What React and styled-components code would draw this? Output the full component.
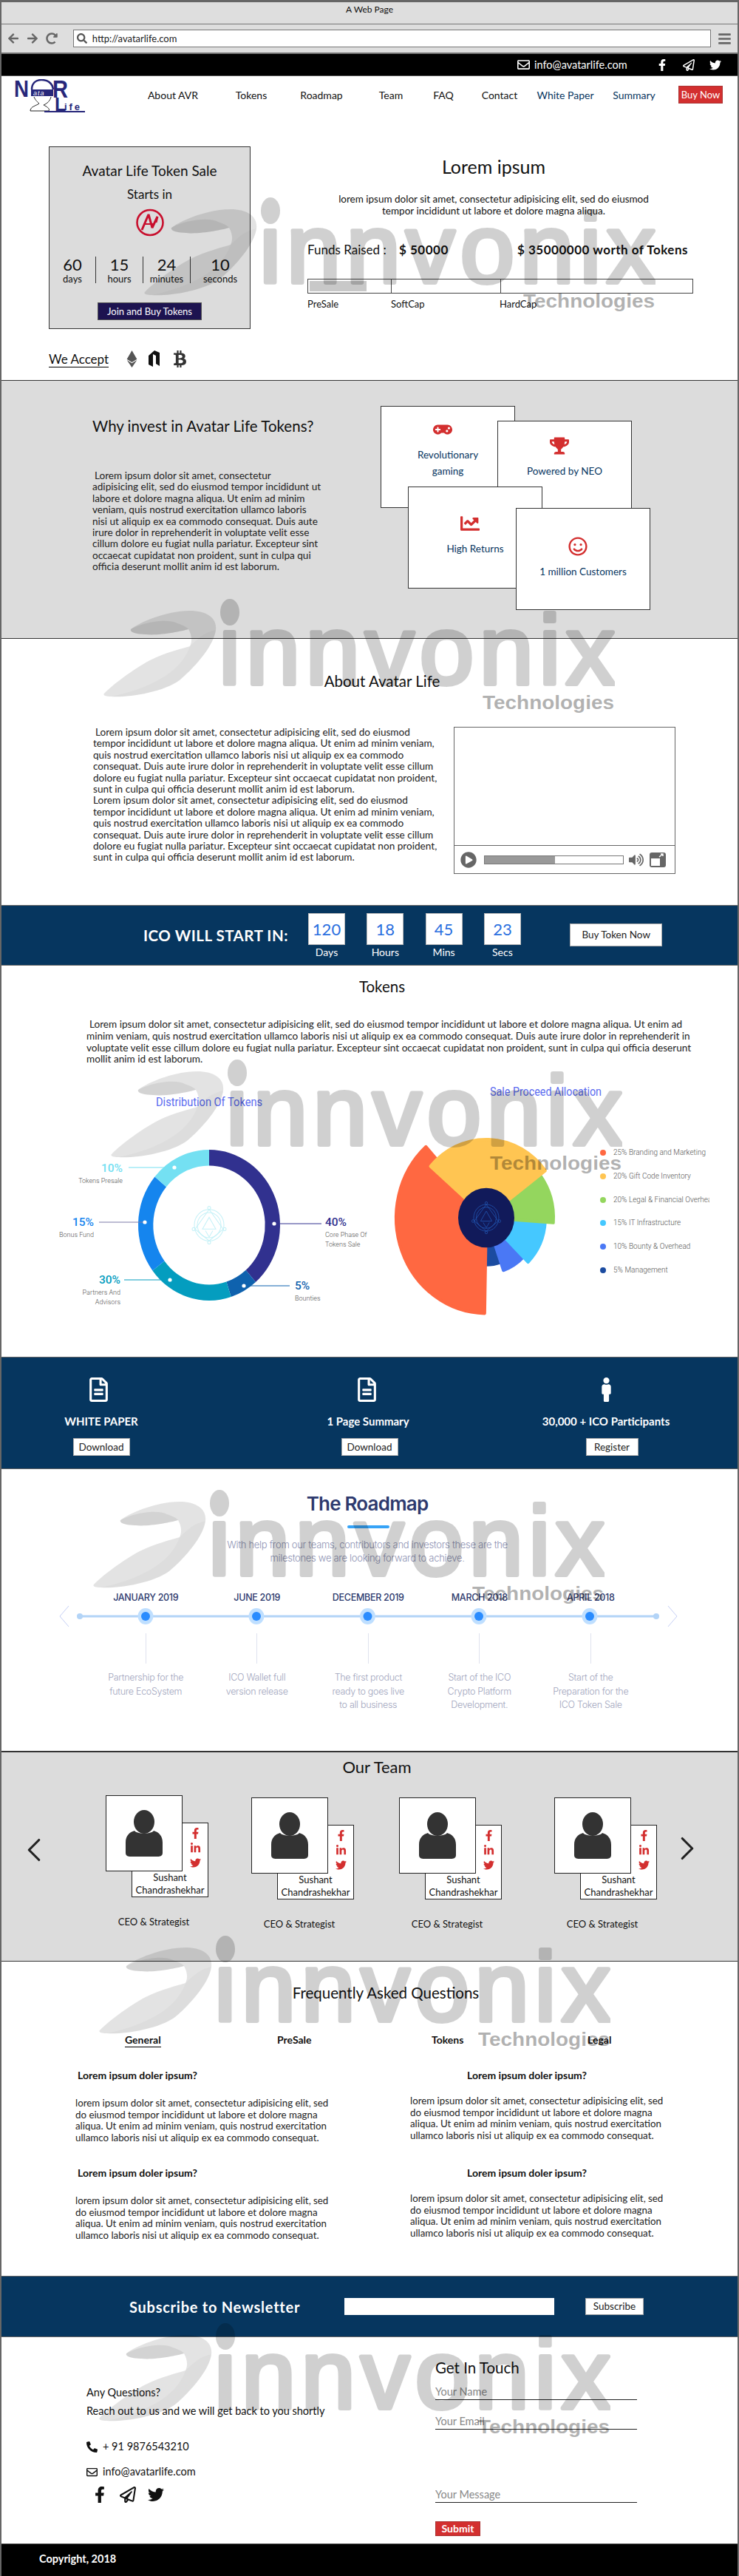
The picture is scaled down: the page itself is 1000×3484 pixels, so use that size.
import React from "react";
import styled, { createGlobalStyle } from "styled-components";
import {
  FaArrowLeft,
  FaArrowRight,
  FaBars,
  FaBtc,
  FaChartLine,
  FaEthereum,
  FaFacebookF,
  FaGamepad,
  FaLinkedinIn,
  FaMale,
  FaPhoneAlt,
  FaPlayCircle,
  FaRedoAlt,
  FaRegEnvelope,
  FaRegFileAlt,
  FaRegPaperPlane,
  FaRegSmile,
  FaSearch,
  FaTrophy,
  FaTwitter,
  FaVolumeUp,
} from "react-icons/fa";
import { ChevronLeft, ChevronRight } from "lucide-react";

const GlobalStyle = createGlobalStyle`
  html, body { margin: 0; padding: 0; background: #fff; }
  * { box-sizing: border-box; }
  body { font-family: "Lato", "Liberation Sans", sans-serif; color: #111; }
`;

const NAVY = "#06365f";
const LOREM_LONG =
  "Lorem ipsum dolor sit amet, consectetur adipisicing elit, sed do eiusmod tempor incididunt ut labore et dolore magna aliqua. Ut enim ad minim veniam, quis nostrud exercitation ullamco laboris nisi ut aliquip ex ea commodo consequat. Duis aute irure dolor in reprehenderit in voluptate velit esse cillum dolore eu fugiat nulla pariatur. Excepteur sint occaecat cupidatat non proident, sunt in culpa qui officia deserunt mollit anim id est laborum.";
const LOREM_FAQ =
  "lorem ipsum dolor sit amet, consectetur adipisicing elit, sed do eiusmod tempor incididunt ut labore et dolore magna aliqua. Ut enim ad minim veniam, quis nostrud exercitation ullamco laboris nisi ut aliquip ex ea commodo consequat.";

const WHY_LINES = [
  "Lorem ipsum dolor sit amet, consectetur",
  "adipisicing elit, sed do eiusmod tempor incididunt ut",
  "labore et dolore magna aliqua. Ut enim ad minim",
  "veniam, quis nostrud exercitation ullamco laboris",
  "nisi ut aliquip ex ea commodo consequat. Duis aute",
  "irure dolor in reprehenderit in voluptate velit esse",
  "cillum dolore eu fugiat nulla pariatur. Excepteur sint",
  "occaecat cupidatat non proident, sunt in culpa qui",
  "officia deserunt mollit anim id est laborum.",
];

const ABOUT_LINES = [
  "tempor incididunt ut labore et dolore magna aliqua. Ut enim ad minim veniam,",
  "quis nostrud exercitation ullamco laboris nisi ut aliquip ex ea commodo",
  "consequat. Duis aute irure dolor in reprehenderit in voluptate velit esse cillum",
  "dolore eu fugiat nulla pariatur. Excepteur sint occaecat cupidatat non proident,",
  "sunt in culpa qui officia deserunt mollit anim id est laborum.",
];

const Page = styled.div`
  position: relative;
  width: 1000px;
  height: 3484px;
  overflow: hidden;
  border-left: 2px solid #666;
  border-right: 2px solid #666;
  background: #fff;
`;

/* browser chrome */
const TitleBar = styled.div`
  height: 33px;
  border-top: 3px solid #666;
  border-bottom: 1px solid #777;
  background: #dedede;
  font-size: 12px;
  line-height: 20px;
  text-align: center;
`;

const ToolBar = styled.div`
  height: 40px;
  display: flex;
  align-items: center;
  padding: 0 8px;
  background: #dedede;
  border-bottom: 2px solid #777;
  color: #666;
`;

const ToolIcons = styled.div`
  width: 89px;
  display: flex;
  gap: 10px;
  font-size: 16px;
  line-height: 0;
`;

const AddressBar = styled.div`
  width: 866px;
  height: 24px;
  display: flex;
  align-items: center;
  gap: 7px;
  padding-left: 4px;
  background: #fff;
  border: 1px solid #777;
  color: #222;
  font-size: 13px;
`;

const Burger = styled.div`
  margin-left: 9px;
  font-size: 19px;
  line-height: 0;
`;

/* top strip and nav */
const TopStrip = styled.div`
  height: 30px;
  display: flex;
  align-items: center;
  padding-left: 698px;
  background: #000;
  color: #fff;
  border-bottom: 1px solid #555;
`;

const StripMail = styled.span`
  width: 188px;
  display: flex;
  align-items: center;
  gap: 6px;
  font-size: 14.5px;
  svg { font-size: 17px; }
`;

const StripIcons = styled.div`
  display: flex;
  gap: 20px;
  font-size: 16px;
  line-height: 0;
`;

const Nav = styled.nav`
  height: 52px;
  display: grid;
  grid-template-columns: 178px 108px 104px 86px 102px 40px 112px 66px 120px 60px;
  align-items: center;
  justify-items: center;
  font-size: 14px;
`;

const LogoSvg = styled.svg`
  justify-self: start;
  margin-left: 16px;
  margin-top: 2px;
`;

const NavLink = styled.a`
  white-space: nowrap;
  margin-top: -1px;
  color: ${(p) => p.$color || "#111"};
`;

const BuyNow = styled.a`
  width: 60px;
  height: 24px;
  margin-top: -3px;
  background: #d32f2f;
  border: 1px solid #a33;
  color: #fff;
  font-size: 13px;
  line-height: 22px;
  text-align: center;
  white-space: nowrap;
`;

/* hero */
const Hero = styled.section`
  height: 360px;
  padding: 43px 0 0 64px;
  border-bottom: 1px solid #333;
`;

const HeroRow = styled.div`
  display: flex;
  gap: 77px;
`;

const SaleCard = styled.div`
  width: 273px;
  height: 247px;
  padding-top: 20px;
  background: #dcdcdc;
  border: 1.5px solid #333;
  text-align: center;
`;

const SaleTitle = styled.div`
  font-size: 19px;
  line-height: 24px;
`;

const StartsIn = styled.div`
  margin: 9px 0 8px;
  font-size: 17px;
  line-height: 22px;
`;

const Counters = styled.div`
  display: grid;
  grid-template-columns: 63px 64px 64px 1fr;
  margin-top: 24px;
`;

const Counter = styled.div`
  height: 36px;
  border-right: ${(p) => (p.$last ? "none" : "1px solid #333")};
`;

const CounterValue = styled.div`
  font-size: 22px;
  line-height: 22px;
`;

const CounterLabel = styled.div`
  font-size: 13px;
  line-height: 16px;
`;

const JoinButton = styled.div`
  width: 141px;
  height: 24px;
  margin: 26px auto 0;
  background: #1d1350;
  border: 1px solid #555;
  color: #fff;
  font-size: 13px;
  line-height: 22px;
`;

const HeroInfo = styled.div`
  width: 522px;
`;

const HeroTitle = styled.h1`
  width: 504px;
  margin: 12px 0 0;
  font-size: 25px;
  font-weight: 400;
  line-height: 30px;
  text-align: center;
`;

const HeroText = styled.p`
  width: 504px;
  margin: 21px 0 0;
  font-size: 13.5px;
  line-height: 16px;
  text-align: center;
`;

const FundsRow = styled.div`
  display: flex;
  margin-top: 35px;
  font-size: 17px;
  line-height: 20px;
`;

const FundLabel = styled.span`
  width: 124px;
`;

const FundValue = styled.strong`
  width: ${(p) => p.$w}px;
  font-weight: 700;
  letter-spacing: 0.5px;
  white-space: nowrap;
`;

const ProgressBar = styled.div`
  display: grid;
  grid-template-columns: 112px 148px 1fr;
  height: 20px;
  margin-top: 29px;
  padding: 0;
  border: 1px solid #444;
`;

const ProgressCell = styled.div`
  border-left: ${(p) => (p.$first ? "none" : "1px solid #444")};
  padding: 2px;
`;

const ProgressFill = styled.div`
  width: 77px;
  height: 14px;
  background: #c8c8c8;
`;

const ProgressLabels = styled.div`
  display: grid;
  grid-template-columns: 113px 147px 1fr;
  margin-top: 6px;
  font-size: 13px;
  line-height: 16px;
`;

const AcceptRow = styled.div`
  display: flex;
  align-items: center;
  height: 30px;
  margin-top: 25px;
  font-size: 17px;
`;

const AcceptLabel = styled.span`
  width: 101px;
  white-space: nowrap;
  span {
    border-bottom: 1px solid #000;
  }
`;

const AcceptIcon = styled.span`
  width: ${(p) => p.$w}px;
  font-size: 23px;
  line-height: 0;
  color: ${(p) => p.$color || "#222"};
`;

/* why invest */
const WhySection = styled.section`
  height: 349px;
  display: flex;
  padding: 48px 0 0 123px;
  background: #dcdcdc;
  border-bottom: 1px solid #333;
`;

const WhyText = styled.div`
  width: 390px;
`;

const SideHeading = styled.h2`
  margin: 0;
  font-size: 20.5px;
  font-weight: 400;
  line-height: 26px;
`;

const BodyText = styled.p`
  width: ${(p) => p.$w}px;
  margin: ${(p) => p.$top || 0}px 0 0;
  font-size: 13.6px;
  line-height: 15.4px;
  color: #222;
  white-space: nowrap;
`;

const Indent = styled.span`
  padding-left: 3px;
`;

const CardStack = styled.div`
  position: relative;
  width: 365px;
  height: 276px;
  margin-top: -14px;
`;

const FeatureCard = styled.div`
  position: absolute;
  left: ${(p) => p.$x}px;
  top: ${(p) => p.$y}px;
  width: 182px;
  height: 138px;
  padding-top: ${(p) => p.$pad}px;
  background: #fff;
  border: 1px solid #333;
  color: ${NAVY};
  font-size: 13.5px;
  line-height: 22px;
  text-align: center;
`;

const FeatureIcon = styled.div`
  height: 28px;
  margin: 0 14px 8px 0;
  color: #d32f2f;
  font-size: 26px;
  line-height: 0;
`;

/* shared heading with the text centred on a page x */
const Heading = styled.h2`
  width: ${(p) => (p.$cx - 2) * 2}px;
  margin: 0;
  font-size: ${(p) => p.$size || 20.5}px;
  font-weight: 400;
  line-height: 26px;
  text-align: center;
`;

/* about */
const AboutSection = styled.section`
  height: 360px;
  padding-top: 44px;
`;

const AboutRow = styled.div`
  display: flex;
  gap: 24px;
  margin-top: 49px;
  padding-left: 124px;
`;

const VideoBox = styled.div`
  width: 300px;
  height: 199px;
  display: flex;
  flex-direction: column;
  justify-content: flex-end;
  border: 1px solid #666;
`;

const VideoControls = styled.div`
  height: 38px;
  display: flex;
  align-items: center;
  gap: 7px;
  padding: 0 11px 0 8px;
  border-top: 1px solid #666;
  color: #666;
`;

const VideoTrack = styled.div`
  width: 189px;
  height: 12px;
  margin-left: 3px;
  border: 1px solid #777;
  background: #fff;
`;

const VideoFill = styled.div`
  height: 100%;
  background: #999;
`;

/* ico band */
const IcoBand = styled.section`
  height: 82px;
  display: flex;
  align-items: flex-start;
  padding: 10px 0 0 192px;
  background: ${NAVY};
  border-top: 1px solid #666;
  border-bottom: 1px solid #666;
  color: #fff;
`;

const IcoTitle = styled.div`
  width: 223px;
  margin-top: 17px;
  font-size: 20.5px;
  font-weight: 700;
  letter-spacing: 0.5px;
  line-height: 26px;
  white-space: nowrap;
`;

const IcoUnit = styled.div`
  width: 50px;
  margin-right: 29.3px;
  text-align: center;
  font-size: 14px;
  line-height: 20px;
`;

const IcoBox = styled.div`
  height: 43px;
  background: #fff;
  border: 1px solid #bbb;
  color: #2a6fe0;
  font-size: 22px;
  line-height: 41px;
`;

const WhiteButton = styled.div`
  width: ${(p) => p.$w}px;
  height: ${(p) => p.$h}px;
  background: #fff;
  border: 1px solid #aaa;
  color: #222;
  font-size: ${(p) => p.$size || 13.5}px;
  line-height: ${(p) => p.$h - 2}px;
  text-align: center;
`;

const IcoButtonWrap = styled.div`
  margin: 14px 0 0 37px;
`;

/* tokens */
const TokensSection = styled.section`
  height: 529px;
  padding-top: 15px;
`;

const TokensText = styled.p`
  width: 828px;
  margin: 31px 0 0 115px;
  font-size: 13.6px;
  line-height: 15.8px;
  text-indent: 4px;
  color: #222;
`;

const ChartRow = styled.div`
  display: flex;
  margin: 19px 0 0 58px;
`;

/* document band */
const DocsBand = styled.section`
  height: 152px;
  display: grid;
  grid-template-columns: 270px 452px 192px;
  padding-top: 27px;
  background: ${NAVY};
  border-top: 1px solid #666;
  border-bottom: 1px solid #666;
  color: #fff;
  text-align: center;
`;

const DocColumn = styled.div`
  display: flex;
  flex-direction: column;
  align-items: center;
`;

const DocIcon = styled.div`
  height: 33px;
  margin-right: ${(p) => p.$nudge || 0}px;
  font-size: 33px;
  line-height: 0;
`;

const DocTitle = styled.div`
  margin-top: 16px;
  font-size: 15px;
  font-weight: 700;
  line-height: 20px;
  white-space: nowrap;
`;

const DocButtonWrap = styled.div`
  margin: 13px 0 0 ${(p) => p.$nudge || 0}px;
`;

/* roadmap */
const RoadmapSection = styled.section`
  height: 381px;
  padding-top: 30px;
  text-align: center;
`;

const RoadmapTitle = styled.h2`
  width: 990px;
  margin: 0;
  color: #2e3a6e;
  font-family: "Inter", sans-serif;
  font-size: 26px;
  font-weight: 600;
  letter-spacing: -0.8px;
  line-height: 34px;
`;

const TitleRule = styled.div`
  width: 57px;
  height: 4px;
  margin: 12px 0 0 468px;
  background: #36a3f7;
  border-radius: 2px;
`;

const RoadmapSub = styled.p`
  width: 990px;
  margin: 13px 0 0;
  color: #8d92b3;
  font-family: "Inter", sans-serif;
  font-size: 13px;
  font-weight: 300;
  letter-spacing: -0.3px;
  line-height: 18px;
`;

const StepGrid = styled.div`
  display: grid;
  grid-template-columns: repeat(5, 150.5px);
  margin-left: 120px;
`;

const DateLabel = styled.div`
  color: #2e3a6e;
  font-family: "Inter", sans-serif;
  font-size: 12.5px;
  font-weight: 500;
  letter-spacing: -0.3px;
  line-height: 18px;
  white-space: nowrap;
`;

const DateGrid = styled(StepGrid)`
  margin-top: 36px;
`;

const RailSvg = styled.svg`
  display: block;
  margin-left: 68px;
`;

const Step = styled.div`
  padding-top: 7px;
`;

const StepLine = styled.div`
  width: 1px;
  height: 41px;
  margin: 0 auto 10px;
  background: #dfe2ee;
`;

const StepText = styled.div`
  color: #a1a5bd;
  font-family: "Inter", sans-serif;
  font-size: 12.5px;
  font-weight: 300;
  letter-spacing: -0.3px;
  line-height: 18.5px;
`;

/* team */
const TeamSection = styled.section`
  height: 285px;
  padding-top: 7px;
  background: #dcdcdc;
  border-top: 2px solid #333;
  border-bottom: 1px solid #333;
`;

const TeamRow = styled.div`
  display: flex;
  margin-top: 25px;
`;

const Arrow = styled.div`
  width: 18px;
  margin: ${(p) => p.$top}px 0 0 ${(p) => p.$left}px;
  color: #222;
  line-height: 0;
`;

const TeamCard = styled.div`
  width: 139px;
  margin: ${(p) => p.$top}px 0 0 ${(p) => p.$left}px;
`;

const TeamFrame = styled.div`
  display: grid;
  grid-template-columns: 35px 69px 35px;
  grid-template-rows: 37px 66px 35px;
`;

const Photo = styled.div`
  grid-column: 1 / 3;
  grid-row: 1 / 3;
  display: flex;
  align-items: center;
  justify-content: center;
  background: #fff;
  border: 1px solid #222;
`;

const Socials = styled.div`
  grid-column: 3;
  grid-row: 2;
  display: flex;
  flex-direction: column;
  align-items: center;
  justify-content: space-around;
  padding: 3px 0 1px;
  background: #fff;
  border: 1px solid #222;
  border-left: none;
  border-bottom: none;
  color: #d32f2f;
  font-size: 15px;
`;

const MemberName = styled.div`
  grid-column: 2 / 4;
  grid-row: 3;
  background: #fff;
  border: 1px solid #222;
  border-top: none;
  font-size: 13px;
  line-height: 17px;
  text-align: center;
`;

const MemberRole = styled.div`
  width: 130px;
  margin-top: 24px;
  font-size: 13px;
  line-height: 18px;
  text-align: center;
  white-space: nowrap;
`;

/* faq */
const FaqSection = styled.section`
  height: 425px;
  padding-top: 29px;
`;

const FaqTabs = styled.div`
  display: grid;
  grid-template-columns: 206px 209px 211px 60px;
  margin: 42px 0 0 167px;
  font-size: 14px;
  font-weight: 700;
  line-height: 18px;
`;

const FaqTab = styled.span`
  justify-self: start;
  border-bottom: ${(p) => (p.$active ? "1px solid #000" : "none")};
`;

const FaqGrid = styled.div`
  display: grid;
  grid-template-columns: 453px 356px;
  row-gap: 31px;
  margin: 29px 0 0 100px;
`;

const FaqQuestion = styled.div`
  padding-left: ${(p) => p.$indent}px;
  font-size: 14px;
  font-weight: 700;
  line-height: 18px;
`;

const FaqAnswer = styled.p`
  width: 356px;
  margin: ${(p) => p.$top}px 0 0;
  font-size: 13.3px;
  line-height: 15.5px;
  color: #222;
`;

/* newsletter */
const NewsBand = styled.section`
  height: 83px;
  display: flex;
  align-items: center;
  padding-left: 173px;
  background: ${NAVY};
  border-top: 1px solid #666;
  border-bottom: 1px solid #666;
`;

const NewsTitle = styled.div`
  width: 291px;
  color: #fff;
  font-size: 20px;
  font-weight: 700;
  letter-spacing: 0.75px;
`;

const NewsInput = styled.input`
  width: 284px;
  height: 23px;
  margin-right: 42px;
  background: #fff;
  border: none;
`;

/* contact */
const ContactSection = styled.section`
  height: 279px;
  display: flex;
  padding-left: 115px;
`;

const ContactLeft = styled.div`
  width: 472px;
  padding-top: 65px;
  font-size: 14.5px;
  line-height: 20px;
`;

const ContactLine = styled.div`
  display: flex;
  align-items: center;
  gap: 7px;
  margin-top: ${(p) => p.$top}px;
  svg { font-size: 15px; }
`;

const ContactSocial = styled.div`
  display: flex;
  align-items: center;
  gap: 16px;
  height: 28px;
  margin: 7px 0 0 7px;
  font-size: 22px;
`;

const ContactRight = styled.div`
  width: 273px;
  padding-top: 28px;
`;

const ContactField = styled.input`
  display: block;
  width: 273px;
  height: 23px;
  margin-top: ${(p) => p.$top}px;
  padding: 0;
  background: transparent;
  border: none;
  border-bottom: 1px solid #222;
  font-family: inherit;
  font-size: 14.5px;
  &::placeholder {
    color: #888;
    opacity: 1;
  }
`;

const SubmitButton = styled.div`
  width: 61px;
  height: 20px;
  margin-top: 25px;
  background: #d32f2f;
  border: 1px solid #a33;
  color: #fff;
  font-size: 14px;
  font-weight: 700;
  line-height: 18px;
  text-align: center;
`;

const Footer = styled.footer`
  height: 44px;
  padding-left: 51px;
  background: #000;
  border-top: 1px solid #555;
  color: #fff;
  font-size: 14.5px;
  font-weight: 700;
  line-height: 40px;
`;

/* watermark over the page */
const MarkSvg = styled.svg`
  position: absolute;
  left: ${(p) => p.$x - 2}px;
  top: ${(p) => p.$y}px;
  pointer-events: none;
  z-index: 5;
`;

function Watermark({ x, y }) {
  return (
    <MarkSvg $x={x} $y={y} width="692" height="156" viewBox="0 0 692 156">
      <path
        d="M37 41C48 32 85 16 117 16C140 16 154 26 152 42C150 60 130 87 103 110C80 127 30 134 10 132C2 132 -1 130 1 128C10 118 40 95 63 83C85 72 105 68 117 64C120 58 120 50 115 41C105 44 75 50 57 48C45 48 35 45 37 41Z"
        fill="#000"
        opacity="0.11"
      />
      <path
        d="M37 41C50 33 85 25 100 33C108 36 113 38 115 41C105 44 75 50 57 48C45 48 35 45 37 41Z"
        fill="#000"
        opacity="0.07"
      />
      <path
        d="M10 132C60 122 105 100 117 64C130 52 135 46 152 42C150 60 130 87 103 110C80 127 30 134 10 132Z"
        fill="#000"
        opacity="0.025"
      />
      <g opacity="0.18">
        <ellipse cx="171" cy="18" rx="13" ry="18" fill="#000" />
        <text
          x="156"
          y="115"
          fontFamily="Liberation Sans"
          fontSize="132"
          textLength="536"
          lengthAdjust="spacing"
          stroke="#000"
          strokeWidth="6"
          strokeLinejoin="round"
        >
          innvonix
        </text>
      </g>
      <text
        x="513"
        y="149"
        fontFamily="Liberation Sans"
        fontSize="26"
        fontWeight="700"
        textLength="178"
        lengthAdjust="spacingAndGlyphs"
        fill="#000"
        opacity="0.3"
      >
        Technologies
      </text>
    </MarkSvg>
  );
}

function AvatarLogo() {
  return (
    <LogoSvg width="100" height="46" viewBox="0 0 100 46">
      <text x="1" y="24" fontFamily="Liberation Sans" fontWeight="700" fontSize="32" textLength="20" lengthAdjust="spacingAndGlyphs" fill="#27277a">N</text>
      <path d="M25 14C25 5 31 1 38 1C46 1 53 5 54 14" fill="none" stroke="#27277a" strokeWidth="2.5" />
      <path d="M28 24C30 29 33 31 35 33C31 36 23 37 23 43H48C50 40 45 37 41 35C46 33 50 29 51 24" fill="#fff" stroke="#222" strokeWidth="1" />
      <rect x="24" y="14" width="30" height="9" fill="#27277a" />
      <text x="27" y="21.5" fontFamily="Liberation Sans" fontStyle="italic" fontSize="9" fill="#fff" letterSpacing="1">ata</text>
      <text x="53" y="25" fontFamily="Liberation Sans" fontWeight="700" fontSize="33" textLength="21" lengthAdjust="spacingAndGlyphs" fill="#27277a">R</text>
      <text x="56" y="43" fontFamily="Liberation Sans" fontWeight="700" fontSize="25" fill="#27277a">L</text>
      <text x="69" y="42" fontFamily="Liberation Sans" fontWeight="700" fontSize="13" textLength="21" fill="#27277a">ife</text>
      <rect x="42" y="43" width="55" height="2" fill="#27277a" />
    </LogoSvg>
  );
}

function SaleMark() {
  return (
    <svg width="40" height="38" viewBox="0 0 40 38">
      <ellipse cx="20" cy="19" rx="17.5" ry="17" fill="none" stroke="#c8102e" strokeWidth="2.6" />
      <path d="M9 29L18 8L23 26L30 11L28 19" fill="none" stroke="#c8102e" strokeWidth="3" strokeLinejoin="bevel" />
      <path d="M13 21H24" stroke="#c8102e" strokeWidth="2" />
    </svg>
  );
}

function NeoMark() {
  return (
    <svg width="18" height="24" viewBox="0 0 18 24">
      <path d="M1 8L9 1L16 4V22L11 19V8L7 6V23L1 20Z" fill="#111" />
    </svg>
  );
}

const polar = (r, deg) => {
  const a = (deg * Math.PI) / 180;
  return [r * Math.sin(a), -r * Math.cos(a)];
};

// ring slice, angles clockwise from the top
const slice = (inner, outer, from, to) => {
  const [x0, y0] = polar(outer, from);
  const [x1, y1] = polar(outer, to);
  const [x2, y2] = polar(inner, to);
  const [x3, y3] = polar(inner, from);
  const large = to - from > 180 ? 1 : 0;
  return `M${x0} ${y0}A${outer} ${outer} 0 ${large} 1 ${x1} ${y1}L${x2} ${y2}A${inner} ${inner} 0 ${large} 0 ${x3} ${y3}Z`;
};

function CoreGlyph({ color }) {
  return (
    <g fill="none" stroke={color} strokeWidth="1">
      <circle r="20" />
      <circle r="16" />
      <circle cx="0" cy="-22" r="2" />
      <circle cx="0" cy="22" r="2" />
      <circle cx="-21" cy="5" r="2" />
      <circle cx="21" cy="5" r="2" />
      <path d="M0-20L-19 5L0 20L19 5Z" />
      <path d="M0-10L-9 5H9Z" />
      <path d="M-5 7L0 15L5 7" />
    </g>
  );
}

const DONUT_SLICES = [
  { from: 0, to: 139, color: "#31318f" },
  { from: 139, to: 162, color: "#0f62ae" },
  { from: 162, to: 233, color: "#049dbf" },
  { from: 233, to: 310, color: "#1585ee" },
  { from: 310, to: 360, color: "#74e0f2" },
];

const DONUT_LABELS = [
  { pct: "40%", color: "#31318f", x: 380, y: 198, lines: ["Core Phase Of", "Tokens Sale"], line: [319, 375, 195, "#31318f"], dot: [311, 195] },
  { pct: "5%", color: "#0f62ae", x: 339, y: 284, lines: ["Bounties"], line: [278, 332, 279, "#0f62ae"], dot: [270, 279] },
  { pct: "30%", color: "#049dbf", x: 103, y: 276, anchor: "end", lines: ["Partners And", "Advisors"], line: [108, 170, 271, "#049dbf"], dot: [170, 271] },
  { pct: "15%", color: "#1585ee", x: 67, y: 198, anchor: "end", lines: ["Bonus Fund"], line: [74, 136, 193, "#7c7aa8"], dot: [136, 193] },
  { pct: "10%", color: "#74e0f2", x: 106, y: 125, anchor: "end", lines: ["Tokens Presale"], line: [114, 176, 119, "#74e0f2"], dot: [176, 119] },
];

function DonutChart() {
  return (
    <svg width="440" height="340" viewBox="0 0 440 340" fontFamily="Roboto">
      <text x="151" y="36" fontSize="16.5" textLength="144" lengthAdjust="spacingAndGlyphs" fill="#5b6cf0">Distribution Of Tokens</text>
      <g transform="translate(223 197) scale(1 1.0625)">
        {DONUT_SLICES.map((s) => (
          <path key={s.from} d={slice(75.7, 96, s.from, s.to)} fill={s.color} />
        ))}
        <CoreGlyph color="#c5f1f7" />
      </g>
      {DONUT_LABELS.map((l) => (
        <g key={l.pct}>
          <line x1={l.line[0]} x2={l.line[1]} y1={l.line[2]} y2={l.line[2]} stroke={l.line[3]} strokeWidth="1" />
          <circle cx={l.dot[0]} cy={l.dot[1]} r="2.6" fill="#fff" />
          <text x={l.x} y={l.y} textAnchor={l.anchor || "start"} fontSize="15.5" fontWeight="500" fill={l.color}>{l.pct}</text>
          {l.lines.map((t, i) => (
            <text key={t} x={l.x} y={l.y + 15 + i * 13} textAnchor={l.anchor || "start"} fontSize="9" fill="#555" fontWeight="300">{t}</text>
          ))}
        </g>
      ))}
    </svg>
  );
}

const PIE_SLICES = [
  { from: 161, to: 181, r: 60, color: "#1b4ba0" },
  { from: 135, to: 161, r: 71, color: "#4a78f5" },
  { from: 93.5, to: 135, r: 80, color: "#45c8ff" },
  { from: 53, to: 94, r: 91, color: "#94d65e" },
  { from: 181, to: 318, r: 122, color: "#ff6841" },
  { from: -49, to: 53, r: 100, color: "#ffc552" },
];

const PIE_LEGEND = [
  ["25% Branding and Marketing", "#ff6841", 99],
  ["20% Gift Code Inventory", "#ffc552", 131],
  ["20% Legal & Financial Overhead", "#94d65e", 163],
  ["15% IT Infrastructure", "#45c8ff", 194],
  ["10% Bounty & Overhead", "#4a78f5", 226],
  ["5% Management", "#1b4ba0", 258],
];

function PieChart() {
  return (
    <svg width="460" height="340" viewBox="0 0 460 340" fontFamily="Roboto">
      <text x="163" y="22" fontSize="16.5" textLength="151" lengthAdjust="spacingAndGlyphs" fill="#5b6cf0">Sale Proceed Allocation</text>
      <g transform="translate(158 187) scale(1 1.06)">
        {PIE_SLICES.map((s) => (
          <path
            key={s.color}
            d={slice(0, s.r, s.from, s.to)}
            fill={s.color}
            stroke={s.color}
            strokeWidth="4"
            strokeLinejoin="round"
          />
        ))}
        <circle r="38" fill="#111a5a" />
        <g transform="scale(0.85)">
          <CoreGlyph color="#1f4fa8" />
        </g>
      </g>
      {PIE_LEGEND.map(([label, color, y]) => (
        <g key={label}>
          <circle cx="316" cy={y} r="4" fill={color} />
          <text x="330" y={y + 3} fontSize="10" fill="#555" fontWeight="300">{label}</text>
        </g>
      ))}
    </svg>
  );
}

const ROAD_NODES = [127, 277, 427.5, 578, 728];

function RoadRail() {
  return (
    <RailSvg width="860" height="32" viewBox="0 0 860 32">
      <path d="M23 2L11 16L23 30" fill="none" stroke="#c5cff5" strokeWidth="1" />
      <path d="M834 2L846 16L834 30" fill="none" stroke="#c5cff5" strokeWidth="1" />
      <line x1="38" x2="818" y1="16" y2="16" stroke="#b3d4f7" strokeWidth="3" />
      <circle cx="38" cy="16" r="4" fill="#b3d4f7" />
      <circle cx="818" cy="16" r="4" fill="#b3d4f7" />
      {ROAD_NODES.map((x) => (
        <g key={x}>
          <ellipse cx={x} cy="16" rx="10.5" ry="11" fill="#bfdfff" />
          <circle cx={x} cy="16" r="6" fill="#2a8cff" />
        </g>
      ))}
    </RailSvg>
  );
}

const ROAD_STEPS = [
  ["JANUARY 2019", ["Partnership for the", "future EcoSystem"]],
  ["JUNE 2019", ["ICO Wallet full", "version release"]],
  ["DECEMBER 2019", ["The first product", "ready to goes live", "to all business"]],
  ["MARCH 2018", ["Start of the ICO", "Crypto Platform", "Development."]],
  ["APRIL 2018", ["Start of the", "Preparation for the", "ICO Token Sale"]],
];

function PersonIcon() {
  return (
    <svg width="52" height="64" viewBox="0 0 52 64">
      <ellipse cx="26" cy="16" rx="14" ry="16" fill="#333" />
      <path d="M13 28C17 33 35 33 39 28C46 30 51 35 51 44V58C51 62 48 63 44 63H8C4 63 1 62 1 58V44C1 35 6 30 13 28Z" fill="#333" />
    </svg>
  );
}

const TEAM = [
  { left: 106, top: 0 },
  { left: 58, top: 3 },
  { left: 61, top: 3 },
  { left: 71, top: 3 },
];

export default function App() {
  return (
    <>
      <GlobalStyle />
      <Page>
        <TitleBar>A Web Page</TitleBar>
        <ToolBar>
          <ToolIcons>
            <FaArrowLeft />
            <FaArrowRight />
            <FaRedoAlt />
          </ToolIcons>
          <AddressBar>
            <FaSearch size={14} color="#555" />
            http://avatarlife.com
          </AddressBar>
          <Burger>
            <FaBars />
          </Burger>
        </ToolBar>
        <TopStrip>
          <StripMail>
            <FaRegEnvelope />
            info@avatarlife.com
          </StripMail>
          <StripIcons>
            <FaFacebookF />
            <FaRegPaperPlane />
            <FaTwitter />
          </StripIcons>
        </TopStrip>
        <Nav>
          <AvatarLogo />
          <NavLink>About AVR</NavLink>
          <NavLink>Tokens</NavLink>
          <NavLink>Roadmap</NavLink>
          <NavLink>Team</NavLink>
          <NavLink>FAQ</NavLink>
          <NavLink>Contact</NavLink>
          <NavLink $color={NAVY}>White Paper</NavLink>
          <NavLink $color={NAVY}>Summary</NavLink>
          <BuyNow>Buy Now</BuyNow>
        </Nav>

        <Hero>
          <HeroRow>
            <SaleCard>
              <SaleTitle>Avatar Life Token Sale</SaleTitle>
              <StartsIn>Starts in</StartsIn>
              <SaleMark />
              <Counters>
                <Counter>
                  <CounterValue>60</CounterValue>
                  <CounterLabel>days</CounterLabel>
                </Counter>
                <Counter>
                  <CounterValue>15</CounterValue>
                  <CounterLabel>hours</CounterLabel>
                </Counter>
                <Counter>
                  <CounterValue>24</CounterValue>
                  <CounterLabel>minutes</CounterLabel>
                </Counter>
                <Counter $last>
                  <CounterValue>10</CounterValue>
                  <CounterLabel>seconds</CounterLabel>
                </Counter>
              </Counters>
              <JoinButton>Join and Buy Tokens</JoinButton>
            </SaleCard>
            <HeroInfo>
              <HeroTitle>Lorem ipsum</HeroTitle>
              <HeroText>
                lorem ipsum dolor sit amet, consectetur adipisicing elit, sed do eiusmod
                <br />
                tempor incididunt ut labore et dolore magna aliqua.
              </HeroText>
              <FundsRow>
                <FundLabel>Funds Raised :</FundLabel>
                <FundValue $w={160}>$ 50000</FundValue>
                <FundValue $w={238}>$ 35000000 worth of Tokens</FundValue>
              </FundsRow>
              <ProgressBar>
                <ProgressCell $first>
                  <ProgressFill />
                </ProgressCell>
                <ProgressCell />
                <ProgressCell />
              </ProgressBar>
              <ProgressLabels>
                <span>PreSale</span>
                <span>SoftCap</span>
                <span>HardCap</span>
              </ProgressLabels>
            </HeroInfo>
          </HeroRow>
          <AcceptRow>
            <AcceptLabel>
              <span>We Accept</span>
            </AcceptLabel>
            <AcceptIcon $w={33} $color="#555">
              <FaEthereum />
            </AcceptIcon>
            <AcceptIcon $w={32}>
              <NeoMark />
            </AcceptIcon>
            <AcceptIcon $w={24} $color="#333">
              <FaBtc />
            </AcceptIcon>
          </AcceptRow>
        </Hero>

        <WhySection>
          <WhyText>
            <SideHeading>Why invest in Avatar Life Tokens?</SideHeading>
            <BodyText $w={312} $top={47}>
              {WHY_LINES.map((line, i) => (
                <React.Fragment key={line}>
                  {i === 0 ? <Indent>{line}</Indent> : line}
                  <br />
                </React.Fragment>
              ))}
            </BodyText>
          </WhyText>
          <CardStack>
            <FeatureCard $x={0} $y={0} $pad={18}>
              <FeatureIcon>
                <FaGamepad />
              </FeatureIcon>
              Revolutionary
              <br />
              gaming
            </FeatureCard>
            <FeatureCard $x={158} $y={20} $pad={20}>
              <FeatureIcon>
                <FaTrophy />
              </FeatureIcon>
              Powered by NEO
            </FeatureCard>
            <FeatureCard $x={37} $y={109} $pad={36}>
              <FeatureIcon>
                <FaChartLine />
              </FeatureIcon>
              High Returns
            </FeatureCard>
            <FeatureCard $x={183} $y={138} $pad={38}>
              <FeatureIcon>
                <FaRegSmile />
              </FeatureIcon>
              1 million Customers
            </FeatureCard>
          </CardStack>
        </WhySection>

        <AboutSection>
          <Heading $cx={517}>About Avatar Life</Heading>
          <AboutRow>
            <BodyText $w={464}>
              <Indent>Lorem ipsum dolor sit amet, consectetur adipisicing elit, sed do eiusmod</Indent>
              <br />
              {ABOUT_LINES.map((line) => (
                <React.Fragment key={line}>
                  {line}
                  <br />
                </React.Fragment>
              ))}
              Lorem ipsum dolor sit amet, consectetur adipisicing elit, sed do eiusmod
              <br />
              {ABOUT_LINES.map((line) => (
                <React.Fragment key={line}>
                  {line}
                  <br />
                </React.Fragment>
              ))}
            </BodyText>
            <VideoBox>
              <VideoControls>
                <FaPlayCircle size={22} />
                <VideoTrack>
                  <VideoFill style={{ width: "51%" }} />
                </VideoTrack>
                <FaVolumeUp size={20} />
                <svg width="24" height="22" viewBox="0 0 24 22">
                  <rect x="1" y="1" width="22" height="20" rx="3" fill="#666" />
                  <rect x="3" y="9" width="12" height="10" fill="#fff" />
                  <path d="M14 7L19 3M16 3H19V6" stroke="#fff" strokeWidth="1.5" fill="none" />
                </svg>
              </VideoControls>
            </VideoBox>
          </AboutRow>
        </AboutSection>

        <IcoBand>
          <IcoTitle>ICO WILL START IN:</IcoTitle>
          {[
            ["120", "Days"],
            ["18", "Hours"],
            ["45", "Mins"],
            ["23", "Secs"],
          ].map(([value, label]) => (
            <IcoUnit key={label}>
              <IcoBox>{value}</IcoBox>
              {label}
            </IcoUnit>
          ))}
          <IcoButtonWrap>
            <WhiteButton $w={125} $h={31}>
              Buy Token Now
            </WhiteButton>
          </IcoButtonWrap>
        </IcoBand>

        <TokensSection>
          <Heading $cx={517}>Tokens</Heading>
          <TokensText>{LOREM_LONG}</TokensText>
          <ChartRow>
            <DonutChart />
            <PieChart />
          </ChartRow>
        </TokensSection>

        <DocsBand>
          <DocColumn>
            <DocIcon $nudge={8}>
              <FaRegFileAlt />
            </DocIcon>
            <DocTitle>WHITE PAPER</DocTitle>
            <DocButtonWrap>
              <WhiteButton $w={77} $h={24}>
                Download
              </WhiteButton>
            </DocButtonWrap>
          </DocColumn>
          <DocColumn>
            <DocIcon $nudge={4}>
              <FaRegFileAlt />
            </DocIcon>
            <DocTitle>1 Page Summary</DocTitle>
            <DocButtonWrap $nudge={4}>
              <WhiteButton $w={77} $h={24}>
                Download
              </WhiteButton>
            </DocButtonWrap>
          </DocColumn>
          <DocColumn>
            <DocIcon>
              <FaMale />
            </DocIcon>
            <DocTitle>30,000 + ICO Participants</DocTitle>
            <DocButtonWrap $nudge={16}>
              <WhiteButton $w={71} $h={24}>
                Register
              </WhiteButton>
            </DocButtonWrap>
          </DocColumn>
        </DocsBand>

        <RoadmapSection>
          <RoadmapTitle>The Roadmap</RoadmapTitle>
          <TitleRule />
          <RoadmapSub>
            With help from our teams, contributors and investors these are the
            <br />
            milestones we are looking forward to achieve.
          </RoadmapSub>
          <DateGrid>
            {ROAD_STEPS.map(([date]) => (
              <DateLabel key={date}>{date}</DateLabel>
            ))}
          </DateGrid>
          <RoadRail />
          <StepGrid>
            {ROAD_STEPS.map(([date, lines]) => (
              <Step key={date}>
                <StepLine />
                <StepText>
                  {lines.map((line) => (
                    <div key={line}>{line}</div>
                  ))}
                </StepText>
              </Step>
            ))}
          </StepGrid>
        </RoadmapSection>

        <TeamSection>
          <Heading $cx={510} $size={22}>
            Our Team
          </Heading>
          <TeamRow>
            <Arrow $left={17} $top={47}>
              <ChevronLeft size={54} strokeWidth={1.4} />
            </Arrow>
            {TEAM.map((member) => (
              <TeamCard key={member.left} $left={member.left} $top={member.top}>
                <TeamFrame>
                  <Photo>
                    <PersonIcon />
                  </Photo>
                  <Socials>
                    <FaFacebookF />
                    <FaLinkedinIn />
                    <FaTwitter />
                  </Socials>
                  <MemberName>
                    Sushant
                    <br />
                    Chandrashekhar
                  </MemberName>
                </TeamFrame>
                <MemberRole>CEO &amp; Strategist</MemberRole>
              </TeamCard>
            ))}
            <Arrow $left={14} $top={45}>
              <ChevronRight size={54} strokeWidth={1.4} />
            </Arrow>
          </TeamRow>
        </TeamSection>

        <FaqSection>
          <Heading $cx={522}>Frequently Asked Questions</Heading>
          <FaqTabs>
            <FaqTab $active>General</FaqTab>
            <FaqTab>PreSale</FaqTab>
            <FaqTab>Tokens</FaqTab>
            <FaqTab>Legal</FaqTab>
          </FaqTabs>
          <FaqGrid>
            <div>
              <FaqQuestion $indent={3}>Lorem ipsum doler ipsum?</FaqQuestion>
              <FaqAnswer $top={21}>{LOREM_FAQ}</FaqAnswer>
            </div>
            <div>
              <FaqQuestion $indent={77}>Lorem ipsum doler ipsum?</FaqQuestion>
              <FaqAnswer $top={18}>{LOREM_FAQ}</FaqAnswer>
            </div>
            <div>
              <FaqQuestion $indent={3}>Lorem ipsum doler ipsum?</FaqQuestion>
              <FaqAnswer $top={21}>{LOREM_FAQ}</FaqAnswer>
            </div>
            <div>
              <FaqQuestion $indent={77}>Lorem ipsum doler ipsum?</FaqQuestion>
              <FaqAnswer $top={18}>{LOREM_FAQ}</FaqAnswer>
            </div>
          </FaqGrid>
        </FaqSection>

        <NewsBand>
          <NewsTitle>Subscribe to Newsletter</NewsTitle>
          <NewsInput />
          <WhiteButton $w={79} $h={23}>
            Subscribe
          </WhiteButton>
        </NewsBand>

        <ContactSection>
          <ContactLeft>
            <div>Any Questions?</div>
            <ContactLine $top={5}>Reach out to us and we will get back to you shortly</ContactLine>
            <ContactLine $top={28}>
              <FaPhoneAlt />
              + 91 9876543210
            </ContactLine>
            <ContactLine $top={14}>
              <FaRegEnvelope />
              info@avatarlife.com
            </ContactLine>
            <ContactSocial>
              <FaFacebookF />
              <FaRegPaperPlane />
              <FaTwitter />
            </ContactSocial>
          </ContactLeft>
          <ContactRight>
            <SideHeading>Get In Touch</SideHeading>
            <ContactField $top={8} placeholder="Your Name" />
            <ContactField $top={17} placeholder="Your Email" />
            <ContactField $top={76} placeholder="Your Message" />
            <SubmitButton>Submit</SubmitButton>
          </ContactRight>
        </ContactSection>

        <Footer>Copyright, 2018</Footer>

        <Watermark x={195} y={267} />
        <Watermark x={140} y={810} />
        <Watermark x={150} y={1433} />
        <Watermark x={126} y={2015} />
        <Watermark x={134} y={2618} />
        <Watermark x={134} y={3142} />
      </Page>
    </>
  );
}
